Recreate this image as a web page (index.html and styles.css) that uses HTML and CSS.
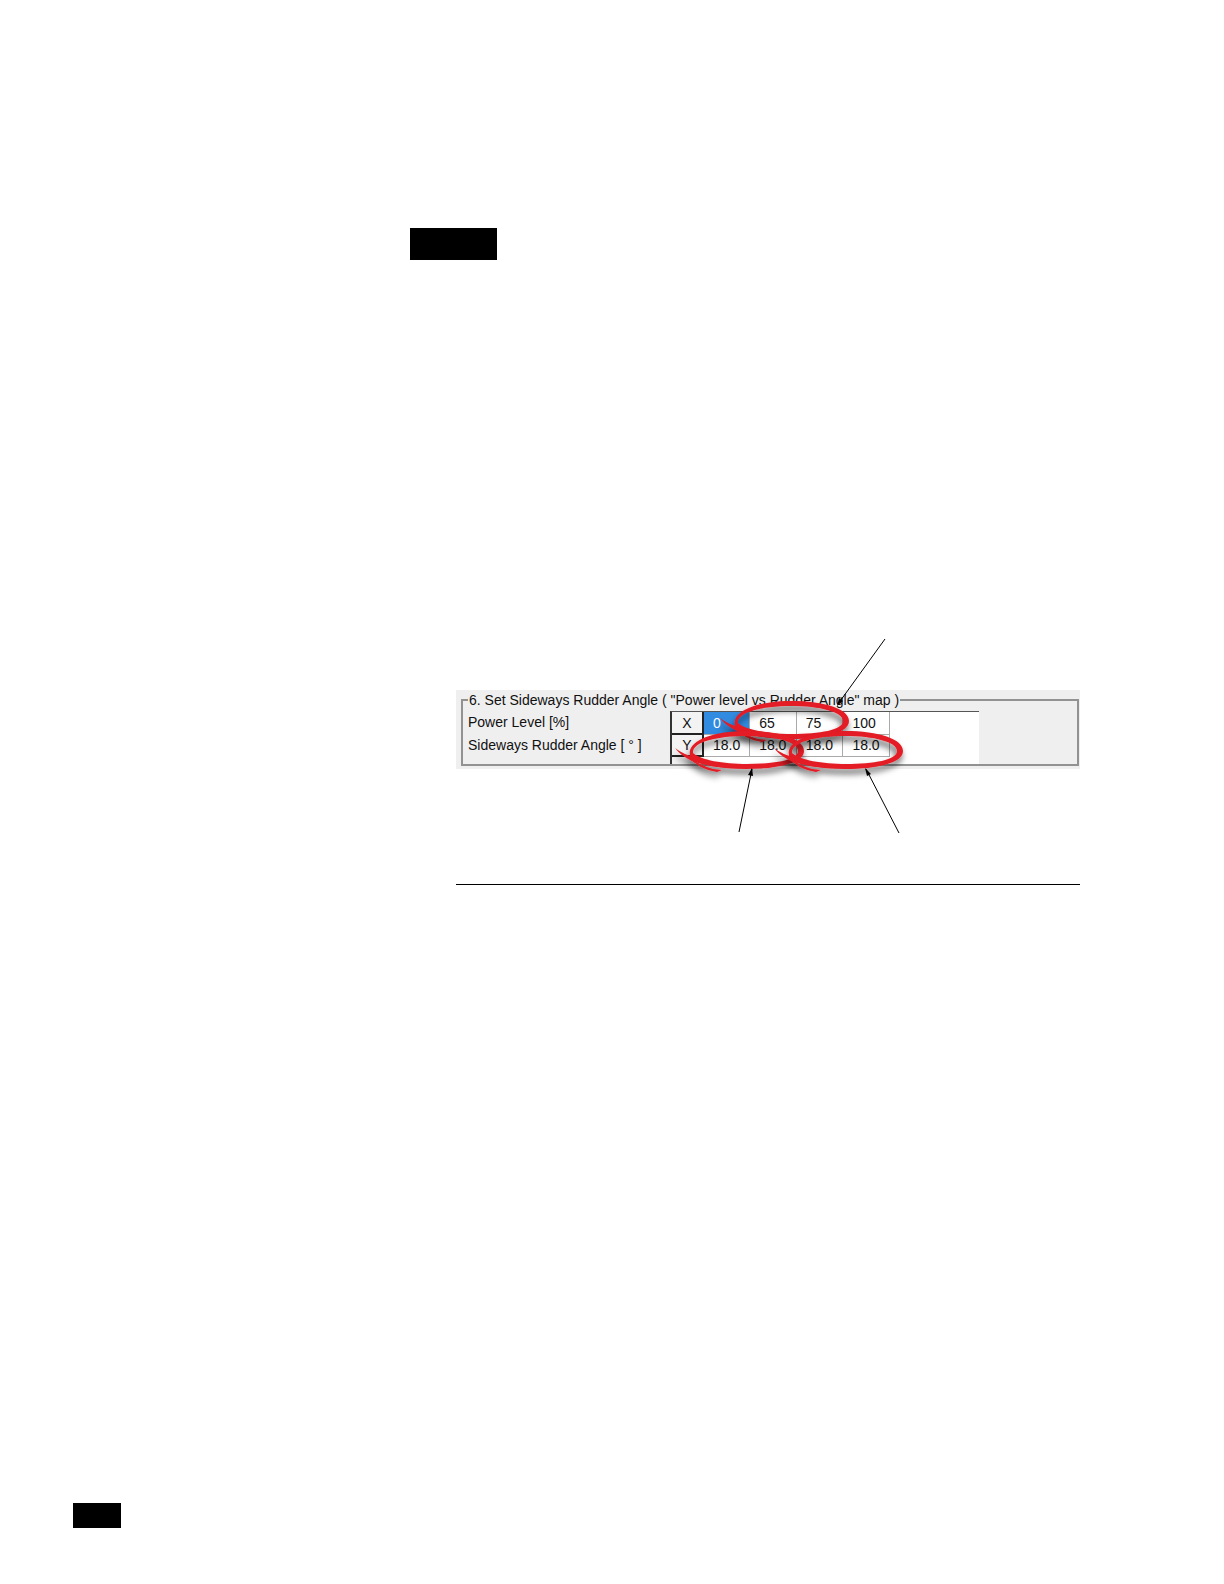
FILE: index.html
```html
<!DOCTYPE html>
<html lang="en">
<head>
  <meta charset="UTF-8">
  <meta name="viewport" content="width=device-width, initial-scale=1.0">
  <title>Set Sideways Rudder Angle</title>
  <link rel="stylesheet" href="styles.css">
</head>
<body>
  <main>
    <div class="tab"></div>

    <figure class="figure">
      <div class="panel">
        <fieldset class="group">
          <legend>6. Set Sideways Rudder Angle ( "Power level vs Rudder Angle" map )</legend>
          <div class="map">
            <div class="labels">
              <div id="power">Power Level [%]</div>
              <div id="angle">Sideways Rudder Angle [ ° ]</div>
            </div>
            <div class="sheet">
              <table>
                <tr aria-labelledby="power">
                  <th>X</th><td class="selected">0</td><td>65</td><td>75</td><td>100</td>
                </tr>
                <tr aria-labelledby="angle">
                  <th>Y</th><td>18.0</td><td>18.0</td><td>18.0</td><td>18.0</td>
                </tr>
                <tr class="stub">
                  <th></th><td></td><td></td><td></td><td></td>
                </tr>
              </table>
            </div>
          </div>
        </fieldset>
      </div>

      <svg class="marks" width="480" height="200" viewBox="0 0 480 200" aria-hidden="true">
        <defs>
          <filter id="shadow" x="-20%" y="-40%" width="140%" height="200%">
            <feDropShadow dx="-1" dy="5" stdDeviation="3" flood-color="#000" flood-opacity="0.6"/>
          </filter>
          <!-- hand drawn ring, thin on the left and heavy on the right -->
          <g id="ring">
            <path fill-rule="evenodd" d="M1 24C-2 10 24 0 57 0C91 0 115 8 115 20C115 32 89 38 57 38C31 38 11 34 1 27ZM4 22C12 29 34 33 58 33C86 33 109 29 109 20C109 11 86 5 57 5C28 5 3 11 4 22Z"/>
            <path d="M-14 17Q-5 24 6 26Q24 32 43 34L43 37Q20 36 3 30Q-8 25 -14 17Z"/>
            <path d="M0 26Q10 34 24 38L33 39L28 41Q9 38 0 26Z"/>
          </g>
        </defs>
        <g fill="#e31c25">
          <use href="#ring" x="278" y="66" filter="url(#shadow)"/>
          <use href="#ring" x="233" y="96" filter="url(#shadow)"/>
          <use href="#ring" x="332" y="96" filter="url(#shadow)"/>
        </g>
        <g stroke="#000" stroke-width="1">
          <path d="M429 4L382 69M283 197L296 134M443 198L410 134"/>
          <path stroke="none" d="M381 71L383 63L387 66ZM296 133L297 141L292 140ZM409 133L415 139L411 141Z"/>
        </g>
      </svg>
    </figure>
  </main>

  <footer>
    <div class="page-box"></div>
  </footer>
</body>
</html>
```
FILE: styles.css
```css
* {
  box-sizing: border-box;
}
body {
  display: flex;
  flex-direction: column;
  min-height: 100vh;
  margin: 0;
  background-color: #fff;
  color: #111;
  font-family: "Liberation Sans", Arial, sans-serif;
  font-size: 14px;
}
main {
  flex: 1;
  padding: 228px 144px 0 410px;
}
.tab {
  width: 87px;
  height: 32px;
  background-color: #000;
}
.figure {
  position: relative;
  margin: 375px 0 0 46px;
  padding: 55px 0 115px;
  border-bottom: 1px solid #000;
}
.panel {
  padding: 2px 1px 3px 5px;
  background-color: #efefef;
}
.group {
  min-width: 0;
  margin: 0;
  padding: 0 5px;
  border: 2px solid #929292;
}
legend {
  padding: 0 1px;
  font-size: 14px;
  line-height: 16px;
  white-space: nowrap;
}
.map {
  display: flex;
  padding-top: 3px;
}
.labels {
  width: 202px;
  line-height: 23px;
  white-space: nowrap;
}
.sheet {
  width: 309px;
  background-color: #fff;
  border-top: 1px solid #555;
  border-left: 2px solid #333;
}
table {
  border-collapse: collapse;
  table-layout: fixed;
  width: 218px;
}
th, td {
  height: 22px;
  padding: 0 0 0 9px;
  border-right: 1px solid #aaa;
  border-bottom: 1px solid #aaa;
  text-align: left;
  font-weight: normal;
}
th {
  width: 31px;
  padding: 0;
  border-right: 2px solid #222;
  border-bottom: 2px solid #222;
  background-color: #f3f3f3;
  text-align: center;
}
.selected {
  background-color: #318be0;
  color: #fff;
}
.stub th, .stub td {
  height: 8px;
  border: 0;
}
.marks {
  position: absolute;
  top: 0;
  left: 0;
}
footer {
  padding: 0 73px 56px;
}
.page-box {
  width: 48px;
  height: 25px;
  background-color: #000;
}
```
